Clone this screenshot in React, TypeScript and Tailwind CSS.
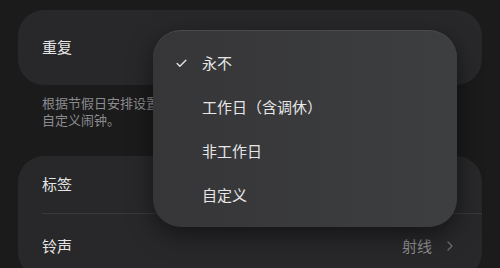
import { Check, ChevronRight } from "lucide-react";

const font = { fontFamily: '"Noto Sans CJK SC", "Noto Sans", sans-serif' };

export default function App() {
  const options = ["永不", "工作日（含调休）", "非工作日", "自定义"];

  return (
    <div className="relative w-[500px] h-[268px] overflow-hidden bg-[#1b1b1c] px-[18px] pt-[10px]" style={font}>
      {/* 重复 */}
      <div className="h-[75px] rounded-[26px] bg-[#28282a] px-6 flex items-center">
        <span className="text-[15px] text-[#e6e6e6]">重复</span>
      </div>

      {/* 说明文字（右侧被菜单遮住） */}
      <div className="ml-6 mt-[9px] w-[111px] overflow-hidden text-[13px] leading-[17px] text-[#8c8c8e] whitespace-nowrap">
        <p>根据节假日安排设置</p>
        <p>自定义闹钟。</p>
      </div>

      {/* 标签 / 铃声 */}
      <div className="mt-[28px] rounded-[26px] bg-[#28282a] pl-6">
        <div className="h-[58px] flex items-center border-b border-[#38383a]">
          <span className="text-[15px] text-[#e6e6e6]">标签</span>
        </div>
        <div className="h-[64px] flex items-center justify-between pr-6">
          <span className="text-[15px] text-[#e6e6e6]">铃声</span>
          <span className="flex items-center gap-[10px] text-[15px] text-[#8c8c8e]">
            射线
            <ChevronRight className="w-4 h-4 text-[#6e6e70]" strokeWidth={1.8} />
          </span>
        </div>
      </div>

      {/* 下拉菜单 */}
      <div className="absolute left-[153px] top-[30px] w-[304px] h-[197px] rounded-[28px] bg-gradient-to-r from-[#363638] to-[#3d3e40] border-t border-[#4a4a4c] shadow-[0_8px_24px_rgba(0,0,0,0.5)] pt-[10px]">
        {options.map((o, i) => (
          <div key={o} className="h-[44px] flex items-center">
            <div className="w-[49px] flex justify-end pr-[14px]">
              {i === 0 && <Check className="w-[13px] h-[13px] text-[#e6e6e6]" strokeWidth={2.5} />}
            </div>
            <span className="text-[15px] text-[#e6e6e6]">{o}</span>
          </div>
        ))}
      </div>
    </div>
  );
}
